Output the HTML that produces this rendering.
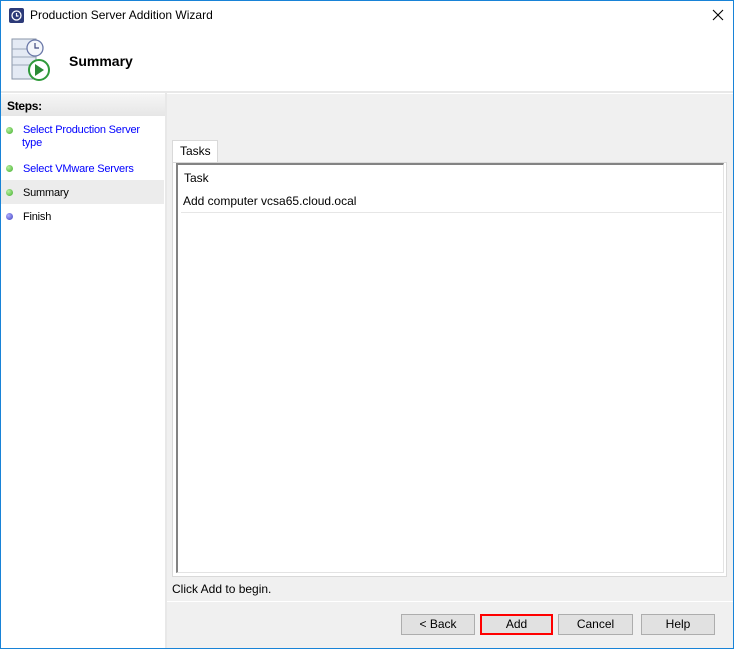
<!DOCTYPE html>
<html><head><meta charset="utf-8"><style>
*{margin:0;padding:0;box-sizing:border-box}
body{width:734px;height:649px;position:relative;overflow:hidden;background:#fff;font-family:"Liberation Sans",sans-serif;font-size:12px;color:#000}
.a{position:absolute}
.frame{left:0;top:0;width:734px;height:649px;border:1px solid #1883d7}
.btn{position:absolute;top:614px;height:21px;background:#e1e1e1;border:1px solid #adadad;text-align:center;line-height:19px;font-size:12px}
.dot{position:absolute;width:7px;height:7px;border-radius:50%}
.g{background:radial-gradient(circle at 35% 35%,#b8f0a0,#3fae2a)}
.b{background:radial-gradient(circle at 35% 35%,#b0b0ff,#4040c0)}
.step{position:absolute;left:23px;font-size:11px;letter-spacing:-0.2px}
</style></head><body>
<div class="a" style="left:9px;top:8px;width:15px;height:15px;background:#2c3a78;border-radius:2px"></div>
<svg class="a" style="left:9px;top:8px" width="15" height="15"><circle cx="7.5" cy="7.5" r="4.5" fill="none" stroke="#fff" stroke-width="1.3"/><path d="M7.5 5v3h2" stroke="#fff" fill="none" stroke-width="1.2"/></svg>
<div class="a" style="left:30px;top:8px;font-size:12px">Production Server Addition Wizard</div>
<svg class="a" style="left:712px;top:9px" width="12" height="12"><path d="M1 1L11 11M11 1L1 11" stroke="#000" stroke-width="1.1"/></svg>
<svg class="a" style="left:10px;top:37px" width="42" height="46">
<rect x="2" y="2" width="24" height="40" fill="#e4eaf4" stroke="#8a96a8"/>
<path d="M2 12H26M2 20H26M2 28H26" stroke="#9aa6b8"/>
<circle cx="25" cy="11" r="8" fill="#f4f6fb" stroke="#6a78a8" stroke-width="1.3"/><path d="M25 6v5h4" stroke="#404a80" fill="none" stroke-width="1.2"/>
<circle cx="29" cy="33" r="10" fill="#fff" stroke="#2f9a3a" stroke-width="2"/>
<path d="M25 27L34 33L25 39Z" fill="#2a8a35"/>
</svg>
<div class="a" style="left:69px;top:53px;font-size:14px;font-weight:bold">Summary</div>
<div class="a" style="left:1px;top:91px;width:732px;height:2px;background:#e8e8e8"></div>
<div class="a" style="left:1px;top:94px;width:164px;height:22px;background:linear-gradient(#f6f6f6,#e6e6e6)"></div>
<div class="a" style="left:7px;top:99px;font-weight:bold;font-size:12px;letter-spacing:-0.3px">Steps:</div>
<div class="a" style="left:165px;top:93px;width:2px;height:555px;background:#e8e8e8"></div>
<div class="dot g" style="left:6px;top:127px"></div>
<div class="step" style="top:124px;color:#0000ff;line-height:13px">Select Production Server<br><span style="margin-left:-1px">type</span></div>
<div class="dot g" style="left:6px;top:165px"></div>
<div class="step" style="top:163px;color:#0000ff">Select VMware Servers</div>
<div class="a" style="left:1px;top:180px;width:163px;height:24px;background:#ececec"></div>
<div class="dot g" style="left:6px;top:189px"></div>
<div class="step" style="top:187px">Summary</div>
<div class="dot b" style="left:6px;top:213px"></div>
<div class="step" style="top:211px">Finish</div>
<div class="a" style="left:167px;top:94px;width:566px;height:554px;background:#f0f0f0"></div>
<div class="a" style="left:172px;top:140px;width:46px;height:24px;background:#fff;border:1px solid #d9d9d9;border-bottom:none"></div>
<div class="a" style="left:180px;top:144px">Tasks</div>
<div class="a" style="left:172px;top:162px;width:555px;height:415px;background:#fff;border:1px solid #d9d9d9"></div>
<div class="a" style="left:176px;top:163px;width:548px;height:410px;border-top:2px solid #838383;border-left:2px solid #838383;border-right:1px solid #e3e3e3;border-bottom:1px solid #e3e3e3;background:#fff"></div>
<div class="a" style="left:184px;top:171px">Task</div>
<div class="a" style="left:183px;top:194px">Add computer vcsa65.cloud.ocal</div>
<div class="a" style="left:181px;top:212px;width:541px;height:1px;background:#e6e6e6"></div>
<div class="a" style="left:172px;top:582px">Click Add to begin.</div>
<div class="a" style="left:167px;top:601px;width:566px;height:1px;background:#fff"></div>
<div class="btn" style="left:401px;width:74px">&lt; Back</div>
<div class="btn" style="left:480px;width:73px;border:2px solid #f00;line-height:17px">Add</div>
<div class="btn" style="left:558px;width:75px">Cancel</div>
<div class="btn" style="left:641px;width:74px">Help</div>
<div class="a frame"></div>
</body></html>
